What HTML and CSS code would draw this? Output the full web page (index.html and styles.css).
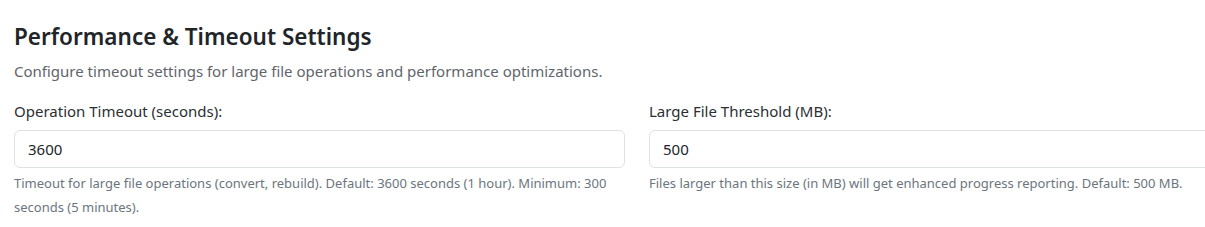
FILE: index.html
```html
<!DOCTYPE html>
<html>
<head>
<meta charset="utf-8">
<link rel="stylesheet" href="styles.css">
</head>
<body>
<section class="settings">
  <h2 class="title">Performance &amp; Timeout Settings</h2>
  <p class="subtitle">Configure timeout settings for large file operations and performance optimizations.</p>
  <div class="grid">
    <div class="field">
      <label class="label">Operation Timeout (seconds):</label>
      <div class="input">3600</div>
      <p class="help">Timeout for large file operations (convert, rebuild). Default: 3600 seconds (1 hour). Minimum: 300 seconds (5 minutes).</p>
    </div>
    <div class="field">
      <label class="label">Large File Threshold (MB):</label>
      <div class="input">500</div>
      <p class="help">Files larger than this size (in MB) will get enhanced progress reporting. Default: 500 MB.</p>
    </div>
  </div>
</section>
</body>
</html>
```
FILE: styles.css
```css
html, body {
  margin: 0;
  padding: 0;
  background: #ffffff;
  overflow: hidden;
}
body {
  font-family: "Noto Sans", "Open Sans", sans-serif;
  color: #212529;
}
.settings {
  padding: 22px 0 0 14px;
  width: 1260px;
}
.title {
  margin: 0;
  font-size: 22.5px;
  font-weight: 600;
  line-height: 30px;
  color: #212529;
}
.subtitle {
  margin: 8px 0 0;
  font-size: 15px;
  line-height: 22px;
  color: #5f656b;
}
.grid {
  display: grid;
  grid-template-columns: 611px 611px;
  column-gap: 24px;
  margin-top: 19px;
}
.label {
  display: block;
  font-size: 15px;
  line-height: 20px;
  color: #2b2f33;
}
.input {
  margin-top: 9px;
  height: 36px;
  border: 1px solid #dee2e6;
  border-radius: 6px;
  padding: 0 13px;
  font-size: 15px;
  line-height: 36px;
  color: #212529;
  box-sizing: content-box;
}
.help {
  margin: 3px 0 0;
  font-size: 13px;
  line-height: 24px;
  color: #6c757d;
}
```
